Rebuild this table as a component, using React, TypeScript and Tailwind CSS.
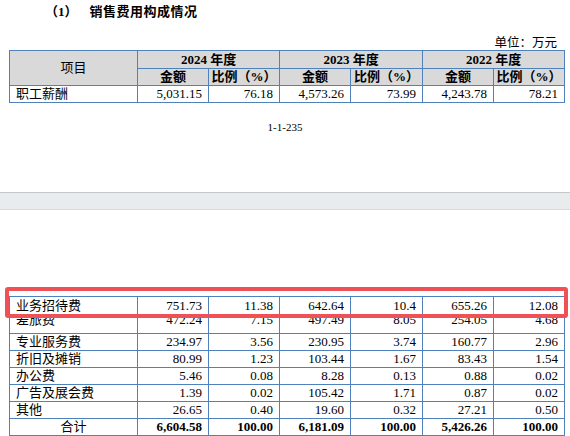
const cjk = "font-['Liberation_Serif','Noto_Sans_CJK_SC',serif]"

const cell = "border border-[#4f81bd] px-[6px] py-0 whitespace-nowrap text-[13px] leading-[14px] text-black"
const head = "border border-[#4f81bd] px-[2px] py-0 whitespace-nowrap text-[13px] leading-[14px] text-black text-center"

const rows = [
  ["专业服务费", "234.97", "3.56", "230.95", "3.74", "160.77", "2.96"],
  ["折旧及摊销", "80.99", "1.23", "103.44", "1.67", "83.43", "1.54"],
  ["办公费", "5.46", "0.08", "8.28", "0.13", "0.88", "0.02"],
  ["广告及展会费", "1.39", "0.02", "105.42", "1.71", "0.87", "0.02"],
  ["其他", "26.65", "0.40", "19.60", "0.32", "27.21", "0.50"],
]

// 差旅费 row sits half under the page break, top of the glyphs hidden
const travel = ["差旅费", "472.24", "7.15", "497.49", "8.05", "254.05", "4.68"]

function Cols() {
  return (
    <colgroup>
      <col className="w-[128px]" />
      <col className="w-[71px]" />
      <col className="w-[71px]" />
      <col className="w-[71px]" />
      <col className="w-[72px]" />
      <col className="w-[71px]" />
      <col className="w-[71px]" />
    </colgroup>
  )
}

export default function App() {
  return (
    <div className={`relative w-[570px] h-[436px] overflow-hidden bg-white ${cjk}`}>
      <div className="h-[24px] flex items-center pl-[45px] text-[13px] font-bold text-black">
        <span>（1）</span>
        <span className="ml-[12px] tracking-[0.5px]">销售费用构成情况</span>
      </div>
      <div className="h-[26px] flex items-end justify-end pr-[13px] text-[12.5px] leading-[14px] text-black">
        单位：万元
      </div>

      <table className="ml-[9px] border-collapse table-fixed w-[555px]">
        <Cols />
        <tbody>
          <tr className="h-[18px] bg-[#d9d9d9]">
            <th rowSpan={2} className={`${head} font-normal`}>项目</th>
            <th colSpan={2} className={`${head} font-bold`}>2024 年度</th>
            <th colSpan={2} className={`${head} font-bold`}>2023 年度</th>
            <th colSpan={2} className={`${head} font-bold`}>2022 年度</th>
          </tr>
          <tr className="h-[17px] bg-[#d9d9d9]">
            <th className={`${head} font-bold`}>金额</th>
            <th className={`${head} font-bold`}>比例（%）</th>
            <th className={`${head} font-bold`}>金额</th>
            <th className={`${head} font-bold`}>比例（%）</th>
            <th className={`${head} font-bold`}>金额</th>
            <th className={`${head} font-bold`}>比例（%）</th>
          </tr>
          <tr className="h-[17px]">
            <td className={`${cell} text-left`}>职工薪酬</td>
            <td className={`${cell} text-right`}>5,031.15</td>
            <td className={`${cell} text-right`}>76.18</td>
            <td className={`${cell} text-right`}>4,573.26</td>
            <td className={`${cell} text-right`}>73.99</td>
            <td className={`${cell} text-right`}>4,243.78</td>
            <td className={`${cell} text-right`}>78.21</td>
          </tr>
        </tbody>
      </table>

      <div className="mt-[17px] h-[14px] text-center text-[11px] leading-[14px] text-black">1-1-235</div>

      <div className="mt-[58px] h-[18px] w-full bg-[#e8eced] border-t border-t-[#c4c7c9] border-b border-b-[#d6d9db]" />

      <table className="mt-[86px] ml-[9px] border-collapse table-fixed w-[555px]">
        <Cols />
        <tbody>
          <tr className="h-[19px]">
            <td className={`${cell} text-left`}>业务招待费</td>
            <td className={`${cell} text-right`}>751.73</td>
            <td className={`${cell} text-right`}>11.38</td>
            <td className={`${cell} text-right`}>642.64</td>
            <td className={`${cell} text-right`}>10.4</td>
            <td className={`${cell} text-right`}>655.26</td>
            <td className={`${cell} text-right`}>12.08</td>
          </tr>
          <tr className="h-[18px]">
            {travel.map((v, i) => (
              <td key={i} className={`${cell} align-top overflow-hidden ${i === 0 ? "text-left" : "text-right"}`}>
                <div className="h-[17px] -mt-[3px]">{v}</div>
              </td>
            ))}
          </tr>
          {rows.map((r) => (
            <tr key={r[0]} className="h-[17px]">
              {r.map((v, i) => (
                <td key={i} className={`${cell} ${i === 0 ? "text-left" : "text-right"}`}>{v}</td>
              ))}
            </tr>
          ))}
          <tr className="h-[17px] font-bold">
            <td className={`${cell} text-center font-normal`}>合计</td>
            <td className={`${cell} text-right`}>6,604.58</td>
            <td className={`${cell} text-right`}>100.00</td>
            <td className={`${cell} text-right`}>6,181.09</td>
            <td className={`${cell} text-right`}>100.00</td>
            <td className={`${cell} text-right`}>5,426.26</td>
            <td className={`${cell} text-right`}>100.00</td>
          </tr>
        </tbody>
      </table>

      <div className="absolute left-[5px] top-[287px] w-[563px] h-[31px] border-[4px] border-[#ef5156] rounded-[3px]" />
    </div>
  )
}
